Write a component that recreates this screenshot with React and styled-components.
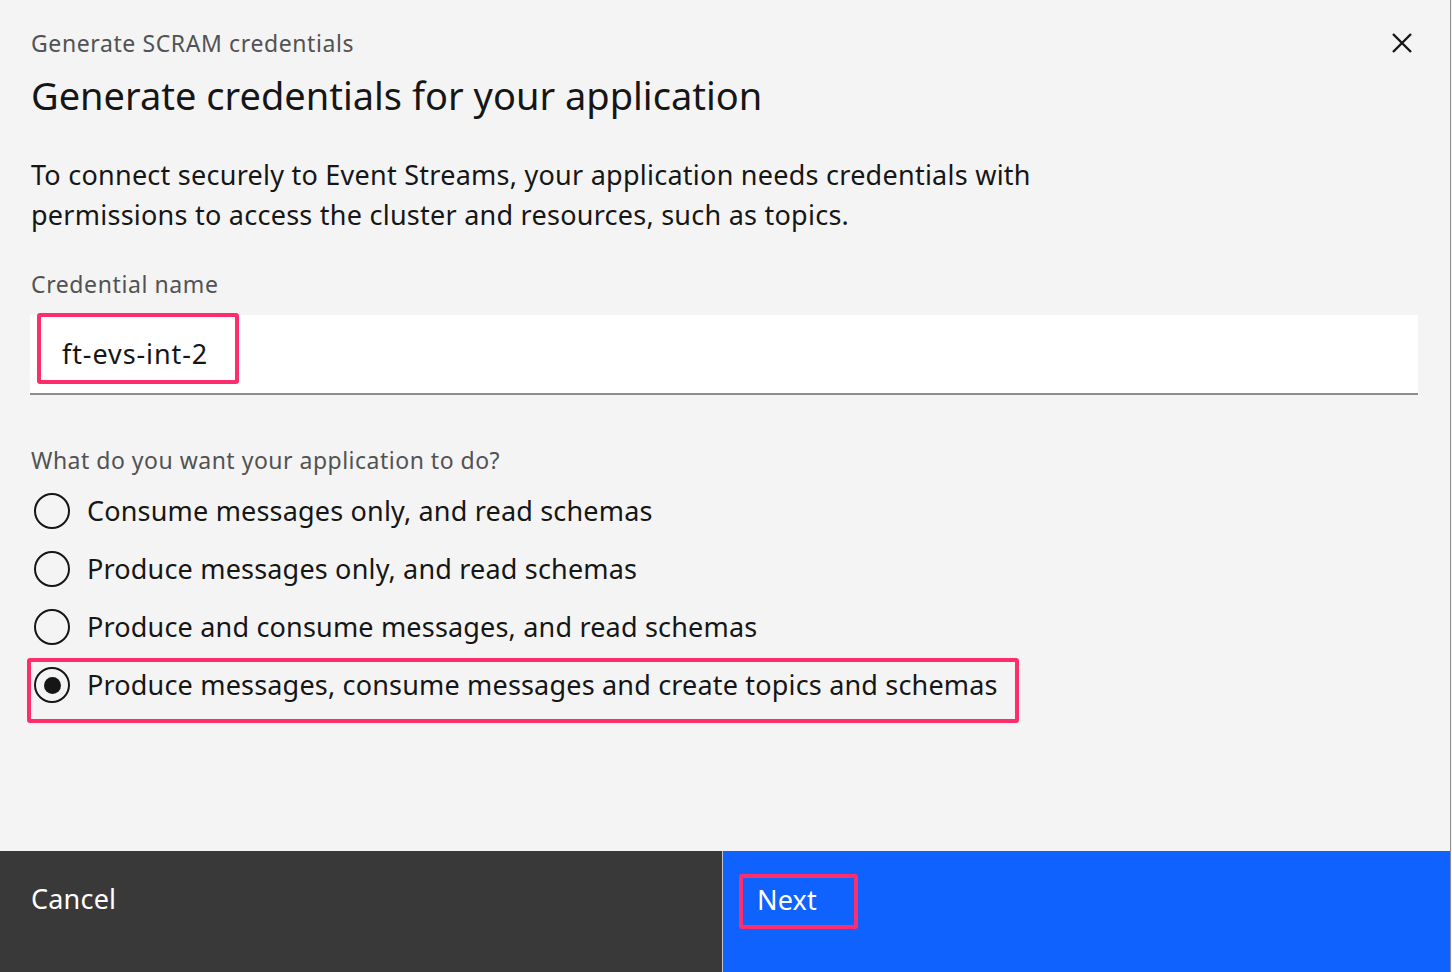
import React from 'react'
import styled, { createGlobalStyle } from 'styled-components'

const GlobalStyle = createGlobalStyle`
  body {
    margin: 0;
    background: #f4f4f4;
    font-family: "Noto Sans", "Liberation Sans", sans-serif;
  }
`

const options = [
  'Consume messages only, and read schemas',
  'Produce messages only, and read schemas',
  'Produce and consume messages, and read schemas',
  'Produce messages, consume messages and create topics and schemas',
]

function CloseIcon() {
  return (
    <svg width="20" height="20" viewBox="0 0 20 20">
      <path d="M1 1 L19 19 M19 1 L1 19" stroke="#161616" strokeWidth="2.4" />
    </svg>
  )
}

function App() {
  return (
    <>
      <GlobalStyle />
      <Modal>
        <Body>
          <Close>
            <CloseIcon />
          </Close>
          <Label>Generate SCRAM credentials</Label>
          <Title>Generate credentials for your application</Title>
          <Intro>
            To connect securely to Event Streams, your application needs credentials with
            permissions to access the cluster and resources, such as topics.
          </Intro>
          <FieldLabel>Credential name</FieldLabel>
          <Input>
            <InputValue>ft-evs-int-2</InputValue>
          </Input>
          <Legend>What do you want your application to do?</Legend>
          <Options>
            {options.map((text, i) => (
              <Option key={text} marked={i === 3}>
                <Radio checked={i === 3} />
                <OptionText>{text}</OptionText>
              </Option>
            ))}
          </Options>
        </Body>
        <Footer>
          <Button kind="secondary">Cancel</Button>
          <Button kind="primary">
            <NextText>Next</NextText>
          </Button>
        </Footer>
      </Modal>
    </>
  )
}

export default App

const Modal = styled.div`
  width: 1450px;
  height: 972px;
  border-right: 1px solid #8d8d8d;
  background: #f4f4f4;
  display: flex;
  flex-direction: column;
  color: #161616;
`
const Body = styled.div`
  position: relative;
  flex: 1;
  padding: 27px 32px 0 30px;
`
const Close = styled.button`
  position: absolute;
  top: 33px;
  right: 38px;
  width: 20px;
  height: 20px;
  padding: 0;
  border: 0;
  background: none;
  display: flex;
`
const Label = styled.div`
  padding-left: 1px;
  font-size: 23px;
  line-height: 32px;
  letter-spacing: 0.6px;
  color: #525252;
`
const Title = styled.h1`
  margin: 8px 0 0;
  padding-left: 1px;
  font-size: 38px;
  line-height: 56px;
  font-weight: 400;
`
const Intro = styled.p`
  margin: 32px 0 0;
  padding-left: 1px;
  width: 1020px;
  font-size: 27px;
  line-height: 40px;
  letter-spacing: 0.25px;
`
const FieldLabel = styled(Label)`
  margin-top: 33px;
`
const Input = styled.div`
  margin-top: 15px;
  width: 1381px;
  height: 78px;
  background: #fff;
  border-bottom: 2px solid #8d8d8d;
  padding-left: 7px;
  box-sizing: content-box;
  display: flex;
  align-items: flex-start;
`
const InputValue = styled.span`
  margin-top: -2px;
  padding: 11px 27px 0 21px;
  height: 52px;
  border: 4px solid #ff2d6c;
  border-radius: 3px;
  font-size: 27px;
  line-height: 52px;
  letter-spacing: 0.9px;
`
const Legend = styled(Label)`
  margin-top: 49px;
  letter-spacing: 0.5px;
`
const Options = styled.div`
  margin-top: 6px;
  display: flex;
  flex-direction: column;
`
const Option = styled.label`
  position: relative;
  height: 58px;
  display: flex;
  align-items: center;
  gap: 17px;
  padding-left: 4px;
  &::after {
    content: '';
    display: ${p => (p.marked ? 'block' : 'none')};
    position: absolute;
    left: -3px;
    top: 2px;
    width: 984px;
    height: 57px;
    border: 4px solid #ff2d6c;
    border-radius: 3px;
  }
`
const Radio = styled.span`
  width: 36px;
  height: 36px;
  box-sizing: border-box;
  border: 2px solid #161616;
  border-radius: 50%;
  display: flex;
  align-items: center;
  justify-content: center;
  &::before {
    content: '';
    display: ${p => (p.checked ? 'block' : 'none')};
    width: 17px;
    height: 17px;
    border-radius: 50%;
    background: #161616;
  }
`
const OptionText = styled.span`
  font-size: 27px;
  line-height: 40px;
  letter-spacing: 0.18px;
`
const Footer = styled.div`
  height: 121px;
  display: flex;
  gap: 1px;
  background: #c6c6c6;
`
const Button = styled.div`
  flex: ${p => (p.kind === 'primary' ? '0 0 727px' : '1')};
  box-sizing: border-box;
  padding: ${p => (p.kind === 'primary' ? '23px 0 0 16px' : '30px 0 0 31px')};
  background: ${p => (p.kind === 'primary' ? '#0f62fe' : '#393939')};
  color: #fff;
  font-size: 27px;
  line-height: 36px;
  letter-spacing: 0.2px;
`
const NextText = styled.span`
  display: inline-block;
  padding: 4px 37px 7px 14px;
  border: 4px solid #ff2d6c;
  border-radius: 3px;
`
